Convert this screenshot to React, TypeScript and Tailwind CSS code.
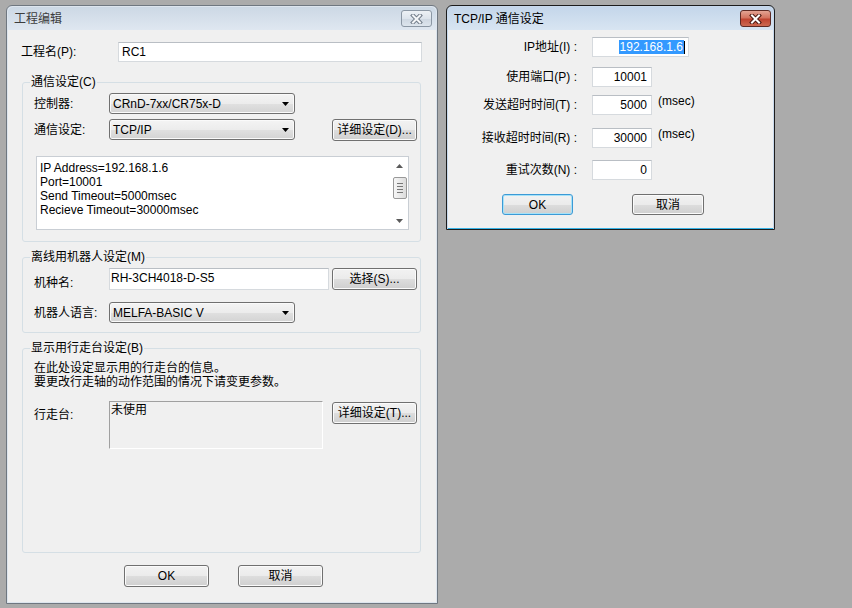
import type { ReactNode } from "react";

const font = "font-['Liberation_Sans','Noto_Sans_CJK_SC',sans-serif]";

function CloseButton({ active }: { active: boolean }) {
  return (
    <div
      className={`flex h-[17px] w-[31px] items-center justify-center rounded-[3px] border ${
        active
          ? "border-[#5e2a24] bg-[linear-gradient(#e3a393_0%,#d3735f_45%,#bf4431_55%,#cc6a52_100%)]"
          : "border-[#8b97a4] bg-[linear-gradient(#edf1f5_0%,#dde4ec_50%,#cfd8e2_55%,#dde5ed_100%)]"
      }`}
    >
      <svg width="13" height="10" viewBox="0 0 13 10">
        <path
          d="M3 1.5 L10 8.5 M10 1.5 L3 8.5"
          stroke={active ? "#4a1710" : "#727d8a"}
          strokeWidth="4"
          strokeLinecap="square"
        />
        <path
          d="M3 1.5 L10 8.5 M10 1.5 L3 8.5"
          stroke={active ? "#ffffff" : "#f4f6f8"}
          strokeWidth="2"
          strokeLinecap="square"
        />
      </svg>
    </div>
  );
}

function Btn({
  children,
  className,
  focus,
}: {
  children: ReactNode;
  className: string;
  focus?: boolean;
}) {
  return (
    <div
      className={`flex items-center justify-center rounded-[3px] border leading-[14px] ${
        focus
          ? "border-[#3c9ad6] shadow-[inset_0_0_0_1px_#a6e2f8]"
          : "border-[#707070] shadow-[inset_0_0_0_1px_#fbfbfb]"
      } bg-[linear-gradient(#f2f2f2_0%,#ebebeb_50%,#dddddd_52%,#cfcfcf_100%)] ${className}`}
    >
      {children}
    </div>
  );
}

function Combo({ value }: { value: string }) {
  return (
    <div className="flex h-[21px] w-[186px] items-center rounded-[3px] border border-[#707070] bg-[linear-gradient(#f4f4f4_0%,#ececec_50%,#e0e0e0_52%,#d3d3d3_100%)] pl-[3px] pr-[5px] leading-[14px] shadow-[inset_0_0_0_1px_#fafafa]">
      <span className="flex-1">{value}</span>
      <svg width="7" height="4" viewBox="0 0 7 4">
        <path d="M0 0 L7 0 L3.5 4 Z" fill="#000" />
      </svg>
    </div>
  );
}

function TextBox({
  children,
  className,
}: {
  children?: ReactNode;
  className: string;
}) {
  return (
    <div
      className={`flex items-center border border-[#d6dade] border-t-[#b9bec4] bg-white leading-[14px] ${className}`}
    >
      {children}
    </div>
  );
}

function Group({
  title,
  className,
  children,
}: {
  title: string;
  className: string;
  children: ReactNode;
}) {
  return (
    <div
      className={`relative ml-[1px] w-[399px] rounded-[3px] border border-[#d5dfe5] pl-[11px] ${className}`}
    >
      <span className="absolute left-[7px] top-[-8px] bg-[#f0f0f0] px-[1px] leading-[14px]">
        {title}
      </span>
      {children}
    </div>
  );
}

function Arrow({ up }: { up?: boolean }) {
  return (
    <svg width="7" height="4" viewBox="0 0 7 4">
      <path d={up ? "M0 4 L3.5 0 L7 4 Z" : "M0 0 L7 0 L3.5 4 Z"} fill="#5a5a5a" />
    </svg>
  );
}

function ProjectWindow() {
  return (
    <div className="absolute left-[6px] top-[5px] flex h-[599px] w-[432px] flex-col rounded-t-[6px] border border-[#6f7780] bg-[#dde5ee] p-[1px]">
      {/* title bar */}
      <div className="flex h-[23px] items-start rounded-t-[5px] bg-[linear-gradient(#ccd8e5,#dfe7f0)] pl-[6px]">
        <span className="mt-[5px] flex-1 leading-[14px] text-[#3d3d3d]">
          工程编辑
        </span>
        <div className="mr-[4px] mt-[3px]">
          <CloseButton active={false} />
        </div>
      </div>

      {/* client */}
      <div className="flex flex-1 flex-col bg-[#f0f0f0] pl-[13px] pt-[12px]">
        <div className="flex items-center">
          <span className="w-[97px] leading-[14px]">工程名(P):</span>
          <TextBox className="h-[20px] w-[304px] pl-[3px]">RC1</TextBox>
        </div>

        <Group title="通信设定(C)" className="mt-[20px] h-[160px] pt-[10px]">
          <div className="flex items-center">
            <span className="w-[75px] leading-[14px]">控制器:</span>
            <Combo value="CRnD-7xx/CR75x-D" />
          </div>
          <div className="mt-[5px] flex items-start">
            <span className="mt-[4px] w-[75px] leading-[14px]">通信设定:</span>
            <Combo value="TCP/IP" />
            <Btn className="ml-[37px] h-[22px] w-[85px]">详细设定(D)...</Btn>
          </div>
          <div className="ml-[2px] mt-[15px] flex h-[74px] w-[373px] border border-[#c9ced4] bg-white">
            <div className="flex-1 pl-[3px] pt-[4px] leading-[14px]">
              <div>IP Address=192.168.1.6</div>
              <div>Port=10001</div>
              <div>Send Timeout=5000msec</div>
              <div>Recieve Timeout=30000msec</div>
            </div>
            <div className="flex w-[17px] flex-col items-center">
              <div className="flex h-[17px] items-center">
                <Arrow up />
              </div>
              <div className="mt-[3px] flex h-[22px] w-[14px] flex-col items-center justify-center gap-[2px] rounded-[2px] border border-[#999] bg-[linear-gradient(90deg,#f6f6f6,#dcdcdc)]">
                <div className="h-[1px] w-[6px] bg-[#777]" />
                <div className="h-[1px] w-[6px] bg-[#777]" />
                <div className="h-[1px] w-[6px] bg-[#777]" />
                <div className="h-[1px] w-[6px] bg-[#777]" />
              </div>
              <div className="flex-1" />
              <div className="flex h-[17px] items-center">
                <Arrow />
              </div>
            </div>
          </div>
        </Group>

        <Group title="离线用机器人设定(M)" className="mt-[15px] h-[76px] pt-[10px]">
          <div className="flex items-start">
            <span className="mt-[8px] w-[75px] leading-[14px]">机种名:</span>
            <TextBox className="h-[22px] w-[220px] items-start pl-[1px] pt-[2px]">
              RH-3CH4018-D-S5
            </TextBox>
            <Btn className="ml-[3px] h-[22px] w-[85px]">选择(S)...</Btn>
          </div>
          <div className="mt-[12px] flex items-center">
            <span className="w-[75px] leading-[14px]">机器人语言:</span>
            <Combo value="MELFA-BASIC V" />
          </div>
        </Group>

        <Group title="显示用行走台设定(B)" className="mt-[15px] h-[205px] pt-[12px]">
          <div className="leading-[14px]">
            <div>在此处设定显示用的行走台的信息。</div>
            <div>要更改行走轴的动作范围的情况下请变更参数。</div>
          </div>
          <div className="mt-[12px] flex items-start">
            <span className="mt-[7px] w-[75px] leading-[14px]">行走台:</span>
            <div className="h-[48px] w-[214px] border border-[#a0a0a0] border-b-white border-r-white pl-[1px] pt-[1px] leading-[14px]">
              未使用
            </div>
            <Btn className="ml-[9px] mt-[1px] h-[22px] w-[85px]">详细设定(T)...</Btn>
          </div>
        </Group>

        <div className="ml-[103px] mt-[12px] flex">
          <Btn className="h-[22px] w-[85px]">OK</Btn>
          <Btn className="ml-[29px] h-[22px] w-[85px]">取消</Btn>
        </div>
      </div>
    </div>
  );
}

function Field({
  label,
  value,
  width,
  className,
  msec,
  selected,
}: {
  label: string;
  value: string;
  width: string;
  className: string;
  msec?: boolean;
  selected?: boolean;
}) {
  return (
    <div className={`flex items-start ${className}`}>
      <span className="mt-[3px] w-[129px] text-right leading-[14px]">{label}</span>
      <TextBox className={`ml-[15px] h-[20px] justify-end pr-[3px] ${width}`}>
        {selected ? (
          <>
            <span className="bg-[#3399ff] px-[1px] text-white">{value}</span>
            <span className="h-[13px] w-[1px] bg-black" />
          </>
        ) : (
          <span className="pr-[1px]">{value}</span>
        )}
      </TextBox>
      {msec && <span className="ml-[6px] leading-[12px]">(msec)</span>}
    </div>
  );
}

function TcpWindow() {
  return (
    <div className="absolute left-[446px] top-[5px] flex h-[225px] w-[329px] flex-col rounded-t-[6px] border border-[#1c1c1c] bg-[#c8d9ec] px-[1px] pt-[1px]">
      <div className="flex h-[23px] items-start rounded-t-[5px] bg-[linear-gradient(#c4d6ea,#d8e5f2)] pl-[6px]">
        <span className="mt-[5px] flex-1 leading-[14px] text-black">
          TCP/IP 通信设定
        </span>
        <div className="mr-[2px] mt-[3px]">
          <CloseButton active />
        </div>
      </div>
      <div className="flex flex-1 flex-col border-b border-[#37b3e6] bg-[#f0f0f0] pt-[7px]">
        <Field label="IP地址(I) :" value="192.168.1.6" width="w-[97px]" className="" selected />
        <Field label="使用端口(P) :" value="10001" width="w-[60px]" className="mt-[10px]" />
        <Field label="发送超时时间(T) :" value="5000" width="w-[60px]" className="mt-[8px]" msec />
        <Field label="接收超时时间(R) :" value="30000" width="w-[60px]" className="mt-[13px]" msec />
        <Field label="重试次数(N) :" value="0" width="w-[60px]" className="mt-[12px]" />
        <div className="ml-[54px] mt-[14px] flex">
          <Btn className="h-[21px] w-[71px]" focus>
            OK
          </Btn>
          <Btn className="ml-[59px] h-[21px] w-[72px]">取消</Btn>
        </div>
      </div>
    </div>
  );
}

export default function App() {
  return (
    <div className={`relative h-[608px] w-[852px] overflow-hidden bg-[#ababab] text-[12px] text-black ${font}`}>
      <ProjectWindow />
      <TcpWindow />
    </div>
  );
}
